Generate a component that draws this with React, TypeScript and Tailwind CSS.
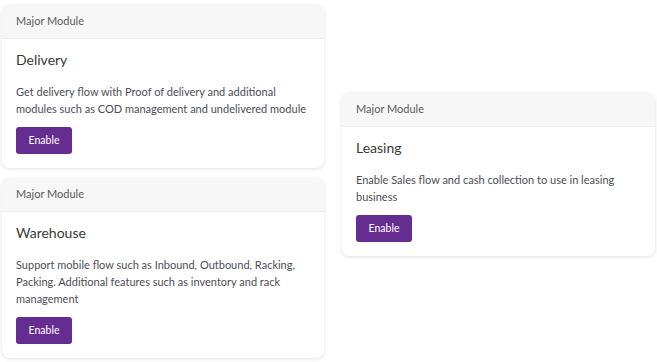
import React from "react";

type Module = {
  name: string;
  description: string;
};

const left: Module[] = [
  {
    name: "Delivery",
    description:
      "Get delivery flow with Proof of delivery and additional modules such as COD management and undelivered module",
  },
  {
    name: "Warehouse",
    description:
      "Support mobile flow such as Inbound, Outbound, Racking, Packing. Additional features such as inventory and rack management",
  },
];

const leasing: Module = {
  name: "Leasing",
  description: "Enable Sales flow and cash collection to use in leasing business",
};

function ModuleCard({ mod, className }: { mod: Module; className?: string }) {
  return (
    <div
      className={[
        "overflow-hidden rounded-[8px] bg-white shadow-[0_1px_4px_rgba(0,0,0,0.12)]",
        className ?? "",
      ].join(" ")}
    >
      {/* header */}
      <div className="flex h-[34px] items-center border-b border-[#ececec] bg-[#f7f7f7] px-[14px] text-[11px] text-[#5a5a5a]">
        Major Module
      </div>

      {/* body */}
      <div className="px-[14px] pt-[11px] pb-[14px]">
        <h3 className="text-[14px] leading-[20px] text-[#3a3a3a]">{mod.name}</h3>
        <p className="mt-[13px] text-[11px] leading-[17px] text-[#4d4d58]">
          {mod.description}
        </p>
        <button
          type="button"
          className="mt-[10px] flex h-[27px] w-[56px] items-center justify-center rounded-[3px] bg-[#662d91] text-[10.5px] text-white"
        >
          Enable
        </button>
      </div>
    </div>
  );
}

export default function App() {
  return (
    <div className="flex h-[362px] w-[657px] items-start bg-white font-['Lato',sans-serif]">
      <div className="ml-[2px] mt-[5px] flex w-[322px] flex-col gap-[10px]">
        {left.map(m => (
          <ModuleCard key={m.name} mod={m} />
        ))}
      </div>
      <ModuleCard mod={leasing} className="ml-[18px] mt-[93px] w-[313px]" />
    </div>
  );
}
